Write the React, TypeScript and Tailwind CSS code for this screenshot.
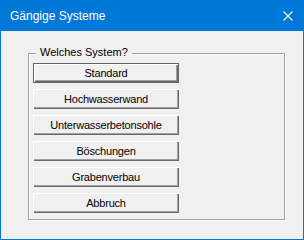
import React from 'react';

const systems = ['Standard', 'Hochwasserwand', 'Unterwasserbetonsohle', 'Böschungen', 'Grabenverbau', 'Abbruch'];

// classic 3D bevel of a Win32 push button
const bevel = 'shadow-[inset_1px_1px_0_#ffffff,inset_-1px_-1px_0_#696969,inset_-2px_-2px_0_#a0a0a0]';

const App: React.FC = () => {
  return (
    <div className="w-[304px] h-[240px] flex flex-col bg-[#0078d7] font-['Liberation_Sans',Arial,sans-serif] select-none">
      {/* Title bar */}
      <div className="h-[31px] shrink-0 flex items-center justify-between pl-[10px] pr-[11px]">
        <span className="text-white text-[12px] leading-none">Gängige Systeme</span>
        <svg width="10" height="10" viewBox="0 0 10 10" className="block">
          <path d="M0.5 0.5 L9.5 9.5 M9.5 0.5 L0.5 9.5" stroke="#ffffff" strokeWidth="1.1" />
        </svg>
      </div>

      {/* Client area */}
      <div className="flex-1 mx-px mb-px bg-[#f0f0f0] pl-[27px] pt-[22px]">
        <div className="relative w-[257px] h-[167px] border border-[#a0a0a0] shadow-[inset_1px_1px_0_#ffffff,1px_1px_0_#ffffff] pl-[4px] pt-[9px]">
          <span className="absolute left-[7px] top-[-8px] px-[4px] bg-[#f0f0f0] text-[11px] leading-[13px] text-black">
            Welches System?
          </span>
          <div className="flex flex-col gap-[6px]">
            {systems.map((s, i) => (
              <button
                key={s}
                className={`w-[146px] h-[20px] bg-[#f0f0f0] text-[11px] leading-none tracking-[-0.2px] text-black flex items-center justify-center ${
                  i === 0 ? 'border border-[#646464]' : ''
                }`}
              >
                <span className={`w-full h-full flex items-center justify-center ${bevel}`}>{s}</span>
              </button>
            ))}
          </div>
        </div>
      </div>
    </div>
  );
};

export default App;
